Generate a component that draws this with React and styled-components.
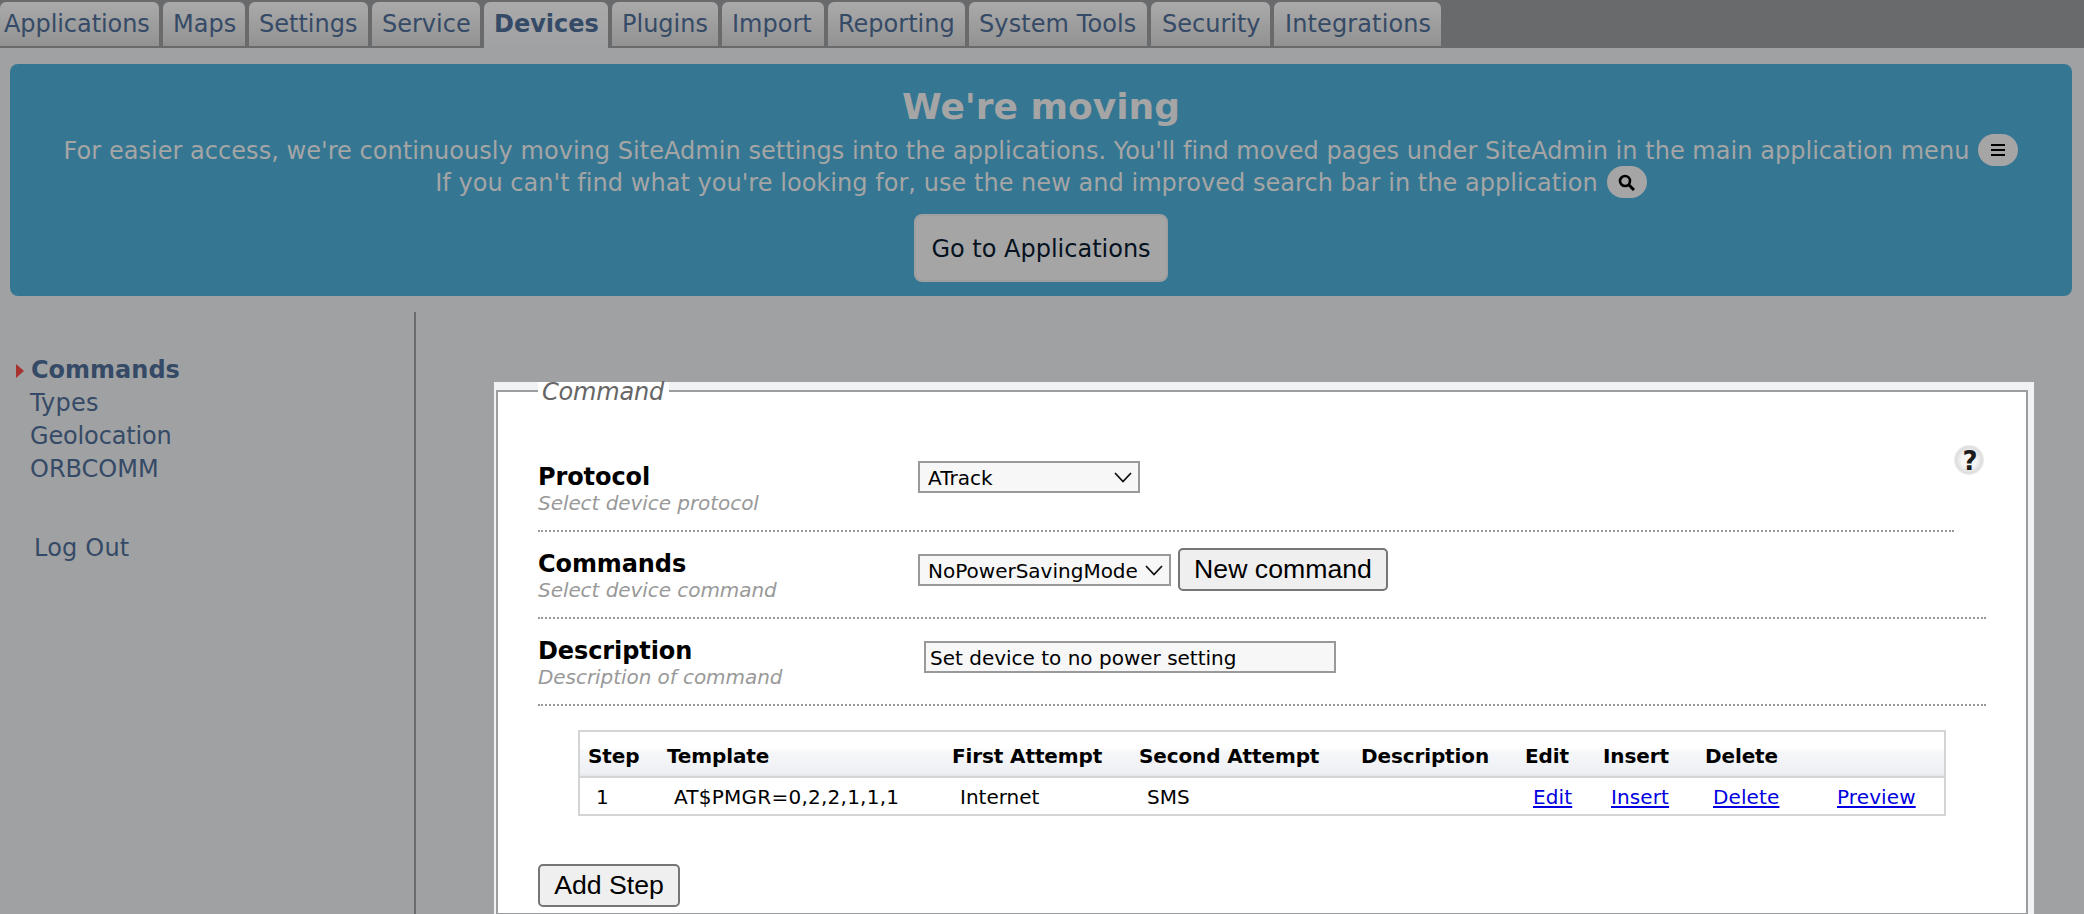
import React from 'react'
import styled, { createGlobalStyle, css } from 'styled-components'

const GlobalStyle = createGlobalStyle`
  * {
    box-sizing: border-box;
  }
  body {
    margin: 0;
    background: #a0a1a3;
    font-family: 'DejaVu Sans', Verdana, sans-serif;
    overflow: hidden;
  }
`

const Page = styled.div`
  height: 914px;
  display: flex;
  flex-direction: column;
  overflow: hidden;
`

const TabBar = styled.nav`
  display: flex;
  flex: none;
  gap: 4px;
  height: 48px;
  padding-top: 2px;
  background: #696a6c;
`

const Tab = styled.a`
  width: ${props => props.$width}px;
  height: 44px;
  padding-left: ${props => props.$left || 10}px;
  border-radius: 6px 6px 0 0;
  background: linear-gradient(#abaaab, #929292);
  color: #354a66;
  font-size: 24px;
  line-height: 44px;
  white-space: nowrap;
  letter-spacing: ${props => props.$spacing || 0}px;
  ${props =>
    props.$active &&
    css`
      height: 46px;
      background: linear-gradient(#abaaab, #a0a1a3);
      font-weight: bold;
    `}
`

const Banner = styled.section`
  flex: none;
  height: 232px;
  margin: 16px 12px 0 10px;
  padding-top: 22px;
  border-radius: 8px;
  background: #357793;
  color: #a5a5a5;
  display: flex;
  flex-direction: column;
  align-items: center;
`

const BannerTitle = styled.h1`
  margin: 0;
  font-size: 36px;
  line-height: 42px;
  height: 48px;
`

const BannerLine = styled.div`
  display: flex;
  align-items: center;
  gap: 9px;
  height: 32px;
`

const BannerText = styled.span`
  padding-top: 2px;
  font-size: 24px;
  letter-spacing: 0.04px;
  white-space: nowrap;
`

const Pill = styled.span`
  display: flex;
  align-items: center;
  justify-content: center;
  width: 40px;
  height: 32px;
  border-radius: 16px;
  background: #a5a5a5;
`

const BannerButton = styled.button`
  width: 254px;
  height: 68px;
  margin-top: 16px;
  padding: 2px 0 0;
  border: 2px solid #9f9fa1;
  border-radius: 8px;
  background: #a5a5a5;
  color: #05121f;
  font-family: inherit;
  font-size: 24px;
`

const Body = styled.div`
  display: flex;
  flex: 1;
  margin-top: 16px;
`

const Sidebar = styled.aside`
  width: 416px;
  padding: 41px 0 0 16px;
  border-right: 2px solid #6b6c6e;
`

const NavItem = styled.a`
  display: flex;
  align-items: center;
  height: 33px;
  padding-left: 14px;
  color: #354a66;
  font-size: 24px;
  letter-spacing: ${props => props.$spacing || 0}px;
  ${props =>
    props.$active &&
    css`
      padding-left: 0;
      font-weight: bold;
    `}
  ${props =>
    props.$logout &&
    css`
      margin-top: 46px;
      padding-left: 18px;
    `}
`

const Arrow = styled.svg`
  margin: 2px 7px 0 0;
`

const Content = styled.main`
  margin: 70px 0 0 78px;
  width: 1540px;
  padding: 8px 6px 0 2px;
  background: #f0f2f4;
`

const Panel = styled.div`
  height: 525px;
  border: 2px solid #9c9d9f;
  background: #fff;
  padding: 0 40px;
`

const Legend = styled.div`
  width: 131px;
  height: 28px;
  margin-top: -10px;
  padding-left: 4px;
  background: #fff;
  color: #666;
  font-size: 24px;
  font-style: italic;
  letter-spacing: -0.2px;
  line-height: 21px;
`

const Row = styled.div`
  display: flex;
  height: 87px;
  width: ${props => props.$width || 1448}px;
  border-bottom: 2px dotted #999;
`

const RowLabel = styled.div`
  width: ${props => props.$width || 380}px;
  padding-top: 18px;
  font-size: 24px;
  line-height: 28px;
  font-weight: bold;
  letter-spacing: -0.1px;
`

const Hint = styled.div`
  color: #999;
  font-size: 20px;
  line-height: 24px;
  font-weight: normal;
  font-style: italic;
  letter-spacing: -0.06px;
`

const Select = styled.div`
  display: flex;
  align-items: center;
  justify-content: space-between;
  width: ${props => props.$width}px;
  height: 32px;
  margin-top: ${props => props.$top}px;
  padding: 1px 6px 0 8px;
  border: 2px solid #999;
  background: #f7f7f7;
  font-size: 20px;
  white-space: nowrap;
`

const TextInput = styled.input`
  width: 412px;
  height: 32px;
  margin-top: 22px;
  padding: 1px 0 0 4px;
  border: 2px solid #999;
  background: #f7f7f7;
  color: #000;
  font-family: inherit;
  font-size: 20px;
`

const Button = styled.button`
  width: ${props => props.$width}px;
  height: 43px;
  margin: ${props => props.$margin};
  padding: 0;
  border: 2px solid #767676;
  border-radius: 5px;
  background: #efefef;
  color: #000;
  font-family: 'Liberation Sans', Arial, sans-serif;
  font-size: 26.67px;
`

const FormTop = styled.div`
  display: flex;
  align-items: flex-start;
  padding-top: 35px;
`

const Help = styled.div`
  width: 30px;
  height: 30px;
  padding-left: 2px;
  border-radius: 50%;
  background: radial-gradient(closest-side, #f6f6f6 50%, #dedede 85%, #ececec);
  color: #1c1c1c;
  font-size: 26px;
  font-weight: bold;
  line-height: 32px;
  text-align: center;
`

const Table = styled.div`
  width: 1368px;
  height: 86px;
  margin: 24px 0 48px 40px;
  border: 2px solid #d3d4d6;
  font-size: 20px;
`

const TableRow = styled.div`
  display: grid;
  grid-template-columns: 78px 286px 187px 221px 165px 78px 102px 124px 1fr;
  height: 36px;
  padding-left: 16px;
  line-height: 38px;
  white-space: nowrap;
  a {
    color: #0000e0;
    letter-spacing: 0.12px;
    text-decoration: underline;
    text-decoration-thickness: 2px;
    text-underline-offset: 2px;
  }
`

const TableHead = styled(TableRow)`
  grid-template-columns: 79px 285px 187px 222px 164px 78px 102px 124px 1fr;
  height: 46px;
  padding-left: 8px;
  border-bottom: 2px solid #d3d4d6;
  background: linear-gradient(#fff 35%, #f6f7f9 45%, #eff0f5 92%, #e4e6ea);
  font-weight: bold;
  letter-spacing: -0.12px;
  line-height: 49px;
`

const Template = styled.span`
  letter-spacing: 0.24px;
`

const tabs = [
  { name: 'Applications', width: 159, left: 4, spacing: -0.07 },
  { name: 'Maps', width: 82 },
  { name: 'Settings', width: 119 },
  { name: 'Service', width: 108 },
  { name: 'Devices', width: 124, active: true },
  { name: 'Plugins', width: 106 },
  { name: 'Import', width: 102 },
  { name: 'Reporting', width: 137 },
  { name: 'System Tools', width: 178, spacing: 0.1 },
  { name: 'Security', width: 119, left: 11 },
  { name: 'Integrations', width: 167, left: 11, spacing: 0.12 }
]

const Chevron = () => (
  <svg width="18" height="12" viewBox="0 0 18 12">
    <path d="M1 1L9 9.5L17 1" fill="none" stroke="#111" strokeWidth="1.8" />
  </svg>
)

const App = () => (
  <Page>
    <GlobalStyle />
    <TabBar>
      {tabs.map(tab => (
        <Tab
          key={tab.name}
          $width={tab.width}
          $left={tab.left}
          $spacing={tab.spacing}
          $active={tab.active}
        >
          {tab.name}
        </Tab>
      ))}
    </TabBar>
    <Banner>
      <BannerTitle>We're moving</BannerTitle>
      <BannerLine>
        <BannerText>
          For easier access, we're continuously moving SiteAdmin settings into
          the applications. You'll find moved pages under SiteAdmin in the main
          application menu
        </BannerText>
        <Pill>
          <svg width="16" height="14" viewBox="0 0 16 14">
            <path d="M1 2H15M1 7H15M1 12H15" stroke="#000" strokeWidth="2.2" />
          </svg>
        </Pill>
      </BannerLine>
      <BannerLine>
        <BannerText>
          If you can't find what you're looking for, use the new and improved
          search bar in the application
        </BannerText>
        <Pill>
          <svg width="17" height="17" viewBox="0 0 17 17">
            <circle cx="7" cy="7" r="5" fill="none" stroke="#000" strokeWidth="2.6" />
            <path d="M10.5 10.5L16 16" stroke="#000" strokeWidth="3" />
          </svg>
        </Pill>
      </BannerLine>
      <BannerButton>Go to Applications</BannerButton>
    </Banner>
    <Body>
      <Sidebar>
        <NavItem $active>
          <Arrow width="8" height="14" viewBox="0 0 8 14">
            <path d="M0 0L8 7L0 14Z" fill="#a8322e" />
          </Arrow>
          Commands
        </NavItem>
        <NavItem $spacing={0.2}>Types</NavItem>
        <NavItem $spacing={-0.15}>Geolocation</NavItem>
        <NavItem>ORBCOMM</NavItem>
        <NavItem $logout $spacing={0.2}>
          Log Out
        </NavItem>
      </Sidebar>
      <Content>
        <Panel>
          <Legend>Command</Legend>
          <FormTop>
            <Row $width={1416}>
              <RowLabel>
                Protocol
                <Hint>Select device protocol</Hint>
              </RowLabel>
              <Select $width={222} $top={16}>
                ATrack
                <Chevron />
              </Select>
            </Row>
            <Help>?</Help>
          </FormTop>
          <Row>
            <RowLabel>
              Commands
              <Hint>Select device command</Hint>
            </RowLabel>
            <Select $width={253} $top={22}>
              NoPowerSavingMode
              <Chevron />
            </Select>
            <Button $width={210} $margin="16px 0 0 7px">
              New command
            </Button>
          </Row>
          <Row>
            <RowLabel $width={386}>
              Description
              <Hint>Description of command</Hint>
            </RowLabel>
            <TextInput defaultValue="Set device to no power setting" />
          </Row>
          <Table>
            <TableHead>
              <span>Step</span>
              <span>Template</span>
              <span>First Attempt</span>
              <span>Second Attempt</span>
              <span>Description</span>
              <span>Edit</span>
              <span>Insert</span>
              <span>Delete</span>
              <span />
            </TableHead>
            <TableRow>
              <span>1</span>
              <Template>AT$PMGR=0,2,2,1,1,1</Template>
              <span>Internet</span>
              <span>SMS</span>
              <span />
              <a>Edit</a>
              <a>Insert</a>
              <a>Delete</a>
              <a>Preview</a>
            </TableRow>
          </Table>
          <Button $width={142} $margin="0">
            Add Step
          </Button>
        </Panel>
      </Content>
    </Body>
  </Page>
)

export default App
